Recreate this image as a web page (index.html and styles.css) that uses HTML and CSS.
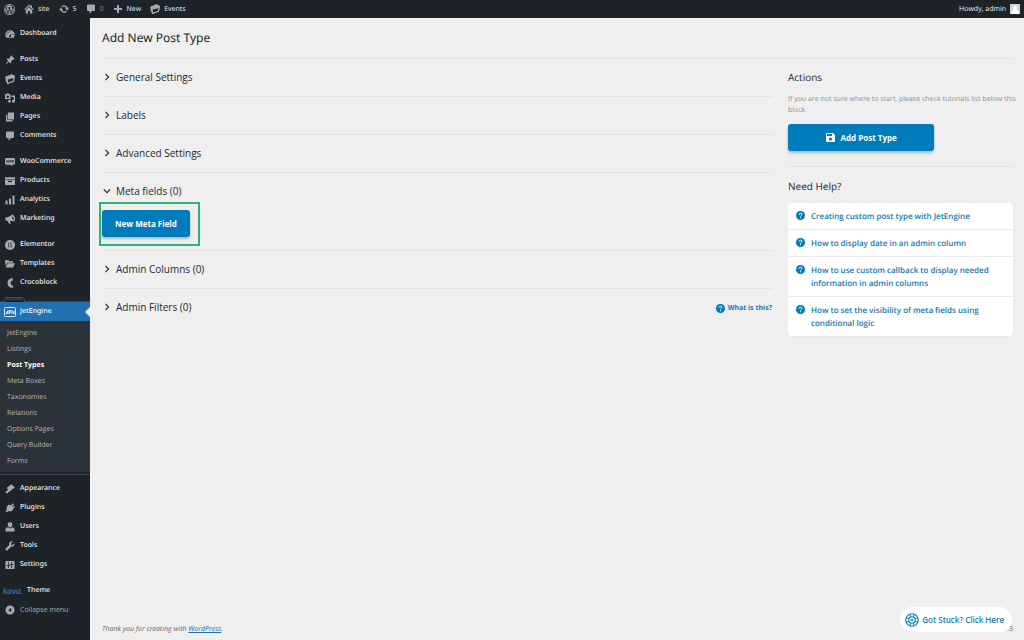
FILE: index.html
```html
<!DOCTYPE html>
<html lang="en">
<head>
<meta charset="utf-8">
<title>Add New Post Type</title>
<link rel="stylesheet" href="styles.css">
</head>
<body>
<svg class="sprite" aria-hidden="true">
  <symbol id="i-wp" viewBox="0 0 20 20"><path fill-rule="evenodd" d="M10 0a10 10 0 1 0 0 20 10 10 0 0 0 0-20zm0 1.2a8.800 8.800 0 1 1 0 17.600 8.800 8.800 0 0 1 0-17.600z"/><path d="M2.200 10c0 3.100 1.800 5.700 4.400 7L2.900 6.800A7.700 7.700 0 0 0 2.200 10zM15.300 9.600c0-1-.4-1.600-.7-2.100-.4-.7-.8-1.200-.8-1.900 0-.7.600-1.400 1.300-1.400A7.800 7.800 0 0 0 3.500 5.700h1.900c.8 0 .8.800.1.900l-.8.100 2.600 7.800 1.600-4.700-1.100-3.100-.8-.1c-.4 0-.4-.8.100-.9h4.200c.6.100.6.800 0 .9l-.8.100 2.600 7.700.8-2.600c.9-1.300 1.400-1.800 1.400-2.200zM10.100 10.700l-2.300 6.800c1.500.5 3.300.4 4.800-.1zM16.800 6.300c.3 1.600-.1 2.700-.5 3.800l-2.400 6.700a7.800 7.800 0 0 0 2.900-10.500z"/></symbol>
  <symbol id="i-home" viewBox="0 0 20 20"><path d="M10 1l3 3V2.500h3V7l3.500 3.500-1.500 1.500L10 4.200 2 12 .5 10.500zM10 6l6.500 6.300V19H12v-5H8v5H3.500v-6.700z"/></symbol>
  <symbol id="i-update" viewBox="0 0 20 20"><path d="M10.200 2.500c3.200 0 5.800 1.900 6.800 4.800H20l-4 6-4-6h2a4.300 4.300 0 0 0-7.200-.6L4.600 4.700a7.400 7.400 0 0 1 5.600-2.200zM4 6.700l4 6H6a4.300 4.300 0 0 0 7.200.6l2.200 2A7.400 7.400 0 0 1 3 12.700H0z"/></symbol>
  <symbol id="i-comment" viewBox="0 0 20 20"><path d="M4 1h12q2 0 2 2v9q0 2-2 2h-4l-5 5.500V14H4q-2 0-2-2V3q0-2 2-2z"/></symbol>
  <symbol id="i-plus" viewBox="0 0 20 20"><path d="M8 2h4v6h6v4h-6v6H8v-6H2V8h6z"/></symbol>
  <symbol id="i-events" viewBox="0 0 20 20"><path fill-rule="evenodd" d="M.5 5.500L14 0l2 2.500 3.500.5L20 6l-2 9.500L4.500 20.500 1.500 13zM5 10l1.500 6.800 9.300-3.300 1.200-6.500z"/><path d="M1.500 6L18 3v5L4 11.500z"/></symbol>
  <symbol id="i-dash" viewBox="0 0 20 20"><path fill-rule="evenodd" d="M3 17.500h14A9 9 0 0 0 10 2.500a9 9 0 0 0-7 15zM9 4.500h2v2H9zM5 6h2v2H5zm-2 4h2v2H3zm12 0h2v2h-2zm-1.500-3.500L11.800 13a2 2 0 1 1-1.500-.8z"/></symbol>
  <symbol id="i-pin" viewBox="0 0 20 20"><path d="M10.500 3l1.800-2.300 7 7L17 9.500l-1.300-.2-3.200 3.200c.4 1.800.2 3.500-1 4.700L8 13.500 1.500 19 1 18.500l5.200-6.800L2.700 8.300C4 7 5.500 6.700 7.500 7.300L10.700 4z"/></symbol>
  <symbol id="i-media" viewBox="0 0 20 20"><path fill-rule="evenodd" d="M0 2.500h2.500L3.500 1h4l1 1.500H11V12H0zM5.500 5a2.500 2.500 0 1 0 0 5 2.500 2.500 0 0 0 0-5z"/><path d="M12.500 5H20v11.500a3 3 0 1 1-2.500-3V8h-5zM9 13.500h2.500v3.300a2.700 2.700 0 1 1-2.500-3z"/></symbol>
  <symbol id="i-pages" viewBox="0 0 20 20"><path d="M6 15V1h12v14zM4.800 5v11.200H15V19H2V5z"/></symbol>
  <symbol id="i-woo" viewBox="0 0 22 20"><path d="M3 1h16q3 0 3 3v9q0 3-3 3h-4l1 3.500L11 16H3q-3 0-3-3V4q0-3 3-3z"/><path class="cut" d="M3 6l1.500 5 2-4 1.500 4L9.500 6M11.500 6.500H14v4h-2.500zM16.500 6.500H19v4h-2.500z"/></symbol>
  <symbol id="i-products" viewBox="0 0 20 20"><path fill-rule="evenodd" d="M0 2.500h20v4H0zm0 5h20V18H0zm6 2v2.500h8V9.500z"/></symbol>
  <symbol id="i-analytics" viewBox="0 0 20 20"><path d="M1 11h4v8H1zM8 7h4v12H8zM15 1h4v18h-4z"/></symbol>
  <symbol id="i-marketing" viewBox="0 0 20 20"><path fill-rule="evenodd" d="M14 1c5 1 8 9.500 4.500 13.500-2 .5-5.500-1.300-8.500-1.200l1.500 5.500-3.500.7-2.500-5.500C1.500 14.500-.5 10.500.8 7 5.500 6.500 10 5.500 14 1zm.2 4c-1 2.500.8 6 3 6.700 1-3-.8-6.500-3-6.700z"/></symbol>
  <symbol id="i-elementor" viewBox="0 0 20 20"><circle cx="10" cy="10" r="10"/><path class="cut" d="M7 5.500v9M9.500 6.500H14M9.500 10H14M9.500 13.500H14"/></symbol>
  <symbol id="i-folder" viewBox="0 0 20 20"><path d="M0 2.500h7l1.500 2H16v3H4.500L1 14zM5.500 8.500H20l-4 8.500H1z"/></symbol>
  <symbol id="i-croco" viewBox="0 0 20 20"><path d="M15.500 0v5.500A4.500 4.500 0 0 0 11 10a4.500 4.500 0 0 0 4.500 4.500V20Q5 19 5 10T15.500 0z"/></symbol>
  <symbol id="i-jet" viewBox="0 0 24 20"><rect class="line" x="1" y="1" width="22" height="18" rx="2"/><path class="line" d="M4 14l4-7v7M5 12h3M11 14V7h3M11 10h3M16 14V7l4 7V7"/></symbol>
  <symbol id="i-brush" viewBox="0 0 20 20"><path d="M9.500 3L13 .5l6.500 5.800L18 9.500l-2.500-.7-3.500 4.200c.2 1.200-1.800 2-2.800 1L5 18.500q-2.500 1-3.500-.5t.2-2.500L6.500 11 4 9q-.5-2.500 1.500-3.200z"/></symbol>
  <symbol id="i-plug" viewBox="0 0 20 20"><path d="M12 5l4-4.500L18 2.500l-3.500 4L16 8l2.500-2.500L20 7.500l-3.500 4C15.500 16.500 10 18 6.500 16L3.500 19 1 16.500l3-3C2 10 3.500 6 8 3z"/></symbol>
  <symbol id="i-user" viewBox="0 0 20 20"><path d="M10 .5a4.500 4.500 0 0 1 4.500 4.800c0 2.700-2 5.200-4.500 5.200S5.500 8 5.500 5.300A4.500 4.500 0 0 1 10 .5zM5.500 10.500L10 13l4.500-2.500Q19 11.500 19 15v4H1v-4q0-3.500 4.500-4.500z"/></symbol>
  <symbol id="i-tool" viewBox="0 0 20 20"><path d="M17.500 10c-1.300 1.200-3.500 1.600-5.100 1L5 18.700q-1.800 1-3.200-.4T1.300 15L8.800 7.800A5.200 5.200 0 0 1 15.700 1L12 5l.5 2.500 2.500.6 3.800-3.600c.5 1.800.1 4.100-1.300 5.500z"/></symbol>
  <symbol id="i-settings" viewBox="0 0 20 20"><path fill-rule="evenodd" d="M1 2h18v16H1zm5 2v6H4v2h2v4h1.500v-4h2v-2h-2V4zm6.500 0v4h-2v2h2v6H14v-6h2V8h-2V4z"/></symbol>
  <symbol id="i-collapse" viewBox="0 0 20 20"><path fill-rule="evenodd" d="M10 1a9 9 0 1 0 0 18 9 9 0 0 0 0-18zm2.500 4.500v9L6.500 10z"/></symbol>
  <symbol id="i-right" viewBox="0 0 10 10"><path class="stroke" d="M3 1l4 4-4 4"/></symbol>
  <symbol id="i-down" viewBox="0 0 10 10"><path class="stroke" d="M1 3l4 4 4-4"/></symbol>
  <symbol id="i-save" viewBox="0 0 18 18"><path fill-rule="evenodd" d="M2 0h12l4 4v12q0 2-2 2H2q-2 0-2-2V2q0-2 2-2zm0 2v4h10V2zm7 7a3 3 0 1 0 0 6.400A3 3 0 0 0 9 9z"/></symbol>
  <symbol id="i-help" viewBox="0 0 20 20"><circle cx="10" cy="10" r="10"/><path class="mark" d="M7 8q0-3.200 3-3.200T13 7.600q0 1.400-1.500 2.300T10 12.200M10 14v2.200"/></symbol>
  <symbol id="i-buoy" viewBox="0 0 28 28"><circle class="ring" cx="14" cy="14" r="12.500"/><circle class="ring" cx="14" cy="14" r="6.500"/><path class="band" d="M10.500 2v6M17.500 2v6M10.500 20v6M17.500 20v6M2 10.500h6M2 17.500h6M20 10.500h6M20 17.500h6"/><path class="band" d="M11 12.500h6M11 15.500h6"/></symbol>
</svg>

<header class="adminbar">
  <nav class="adminbar-nav" aria-label="Toolbar">
    <a href="#" aria-label="About WordPress"><svg class="icon icon-wp"><use href="#i-wp"/></svg></a>
    <a href="#"><svg class="icon"><use href="#i-home"/></svg>site</a>
    <a href="#"><svg class="icon"><use href="#i-update"/></svg>5</a>
    <a href="#" class="faded"><svg class="icon"><use href="#i-comment"/></svg>0</a>
    <a href="#"><svg class="icon"><use href="#i-plus"/></svg>New</a>
    <a href="#"><svg class="icon"><use href="#i-events"/></svg>Events</a>
  </nav>
  <a href="#" class="account">Howdy, admin
    <svg class="avatar" viewBox="0 0 20 20"><path d="M0 0h20v20H0z" fill="#d2d2d2"/><path d="M10 3a4 4.500 0 0 1 2.500 8Q18 13 18 20H2q0-7 5.500-9A4 4.500 0 0 1 10 3z" fill="#fff"/></svg>
  </a>
</header>

<div class="shell">
  <nav class="sidebar" aria-label="Main menu">
    <ul class="group">
      <li><a href="#"><svg class="icon"><use href="#i-dash"/></svg>Dashboard</a></li>
    </ul>
    <ul class="group">
      <li><a href="#"><svg class="icon"><use href="#i-pin"/></svg>Posts</a></li>
      <li><a href="#"><svg class="icon"><use href="#i-events"/></svg>Events</a></li>
      <li><a href="#"><svg class="icon"><use href="#i-media"/></svg>Media</a></li>
      <li><a href="#"><svg class="icon"><use href="#i-pages"/></svg>Pages</a></li>
      <li><a href="#"><svg class="icon"><use href="#i-comment"/></svg>Comments</a></li>
    </ul>
    <ul class="group">
      <li><a href="#"><svg class="icon"><use href="#i-woo"/></svg>WooCommerce</a></li>
      <li><a href="#"><svg class="icon"><use href="#i-products"/></svg>Products</a></li>
      <li><a href="#"><svg class="icon"><use href="#i-analytics"/></svg>Analytics</a></li>
      <li><a href="#"><svg class="icon"><use href="#i-marketing"/></svg>Marketing</a></li>
    </ul>
    <ul class="group">
      <li><a href="#"><svg class="icon"><use href="#i-elementor"/></svg>Elementor</a></li>
      <li><a href="#"><svg class="icon"><use href="#i-folder"/></svg>Templates</a></li>
      <li><a href="#"><svg class="icon"><use href="#i-croco"/></svg>Crocoblock</a></li>
    </ul>
    <div class="divider"><span class="divider-tag">PLUGINS</span></div>
    <ul class="jet">
      <li><a href="#" class="current"><svg class="icon icon-jet"><use href="#i-jet"/></svg>JetEngine</a>
        <ul class="submenu">
          <li><a href="#">JetEngine</a></li>
          <li><a href="#">Listings</a></li>
          <li><a href="#" class="selected">Post Types</a></li>
          <li><a href="#">Meta Boxes</a></li>
          <li><a href="#">Taxonomies</a></li>
          <li><a href="#">Relations</a></li>
          <li><a href="#">Options Pages</a></li>
          <li><a href="#">Query Builder</a></li>
          <li><a href="#">Forms</a></li>
        </ul>
      </li>
    </ul>
    <div class="divider divider-end"></div>
    <ul class="group">
      <li><a href="#"><svg class="icon"><use href="#i-brush"/></svg>Appearance</a></li>
      <li><a href="#"><svg class="icon"><use href="#i-plug"/></svg>Plugins</a></li>
      <li><a href="#"><svg class="icon"><use href="#i-user"/></svg>Users</a></li>
      <li><a href="#"><svg class="icon"><use href="#i-tool"/></svg>Tools</a></li>
      <li><a href="#"><svg class="icon"><use href="#i-settings"/></svg>Settings</a></li>
    </ul>
    <ul class="group">
      <li><a href="#" class="theme"><span class="kava" aria-hidden="true">kava.</span>Theme</a></li>
      <li><button type="button" class="collapse"><svg class="icon"><use href="#i-collapse"/></svg>Collapse menu</button></li>
    </ul>
  </nav>

  <div class="page">
    <main>
      <h1>Add New Post Type</h1>
      <div class="columns">
        <div class="sections">
          <section><h2><button type="button"><svg class="chevron"><use href="#i-right"/></svg>General Settings</button></h2></section>
          <section><h2><button type="button"><svg class="chevron"><use href="#i-right"/></svg>Labels</button></h2></section>
          <section><h2><button type="button"><svg class="chevron"><use href="#i-right"/></svg>Advanced Settings</button></h2></section>
          <section>
            <h2><button type="button" aria-expanded="true"><svg class="chevron"><use href="#i-down"/></svg>Meta fields (0)</button></h2>
            <div class="section-body">
              <div class="marked"><button type="button" class="btn">New Meta Field</button></div>
            </div>
          </section>
          <section><h2><button type="button"><svg class="chevron"><use href="#i-right"/></svg>Admin Columns (0)</button></h2></section>
          <section class="with-link"><h2><button type="button"><svg class="chevron"><use href="#i-right"/></svg>Admin Filters (0)</button></h2>
            <a href="#" class="what"><svg class="help"><use href="#i-help"/></svg>What is this?</a></section>
        </div>
        <aside>
          <div class="actions">
            <h2>Actions</h2>
            <p>If you are not sure where to start, please check tutorials list below this block</p>
            <button type="button" class="btn btn-save"><svg class="save"><use href="#i-save"/></svg>Add Post Type</button>
          </div>
          <h2 class="need">Need Help?</h2>
          <ul class="help-list">
            <li><a href="#"><svg class="help"><use href="#i-help"/></svg>Creating custom post type with JetEngine</a></li>
            <li><a href="#"><svg class="help"><use href="#i-help"/></svg>How to display date in an admin column</a></li>
            <li><a href="#"><svg class="help"><use href="#i-help"/></svg>How to use custom callback to display needed information in admin columns</a></li>
            <li><a href="#"><svg class="help"><use href="#i-help"/></svg>How to set the visibility of meta fields using conditional logic</a></li>
          </ul>
        </aside>
      </div>
    </main>
    <footer>
      <span class="thanks">Thank you for creating with <a href="#">WordPress</a>.</span>
      <span>.3</span>
    </footer>
  </div>
</div>
<button type="button" class="stuck"><svg class="buoy"><use href="#i-buoy"/></svg>Got Stuck? Click Here</button>
</body>
</html>
```

FILE: styles.css
```css
* { box-sizing: border-box; }
body {
  margin: 0;
  min-height: 100vh;
  display: flex;
  flex-direction: column;
  background: #efefef;
  color: #23282d;
  font: 8px/11px "Open Sans", "Noto Sans", sans-serif;
  text-rendering: geometricPrecision;
}
ul { list-style: none; margin: 0; padding: 0; }
h1, h2, p { margin: 0; }
a { color: inherit; text-decoration: none; }
button { border: 0; background: none; padding: 0; margin: 0; font: inherit; color: inherit; cursor: pointer; }
svg { display: block; flex: none; fill: currentColor; }
.sprite { position: absolute; width: 0; height: 0; }
.stroke { fill: none; stroke: currentColor; stroke-width: 1.400; }
.cut { fill: none; stroke: #1d2327; stroke-width: 1.400; }
.line { fill: none; stroke: currentColor; stroke-width: 1.700; }
.mark { fill: none; stroke: #fff; stroke-width: 2.200; }
.ring { fill: none; stroke: currentColor; stroke-width: 2.200; }
.band { fill: none; stroke: currentColor; stroke-width: 2; }

/* Toolbar */
.adminbar {
  display: flex;
  justify-content: space-between;
  height: 18px;
  padding: 0 4px;
  background: #1d2327;
  color: #f0f0f1;
}
.adminbar, .sidebar { font-size: 7px; font-weight: 500; }
.adminbar-nav { display: flex; gap: 9px; }
.adminbar a { display: flex; align-items: center; gap: 4px; }
.adminbar .faded { color: #8c9196; }
.icon { width: 10px; height: 10px; color: #a7aaad; }
.icon-wp { width: 11px; height: 11px; }
.avatar { width: 10px; height: 10px; }

/* Side menu */
.shell { display: flex; flex: 1; }
.sidebar { flex: none; width: 90px; padding-top: 6px; background: #1d2327; color: #f0f0f1; line-height: 12px; }
.group { margin-bottom: 7px; }
.group a, .current, .collapse { display: flex; align-items: center; gap: 5px; height: 19px; padding: 1px 0 0 5px; }
.group a, .current { font-family: "Noto Sans", "Open Sans", sans-serif; }
.divider { display: flex; align-items: center; height: 3px; border-bottom: 1px solid #3c434a; }
.divider-tag { margin-left: 4px; padding: 0 1px; border: 1px solid #3c434a; border-radius: 2px; background: #1d2327; color: #6c7075; font-size: 4px; line-height: 4px; }
.divider-end { margin-bottom: 4px; }
.current { position: relative; background: #2271b1; color: #fff; }
.current::after { content: ""; position: absolute; right: 0; top: 5px; border: 5px solid transparent; border-left: 0; border-right-color: #efefef; }
.icon-jet { width: 12px; height: 10px; color: #fff; margin: 0 -1px; }
.submenu { padding: 5px 0 2px; background: #2c3338; color: #b3b6b9; }
.submenu a { display: block; padding-left: 7px; line-height: 16px; }
.submenu .selected { color: #fff; font-weight: 700; }
.group .theme { padding-left: 3px; gap: 4px; }
.kava { color: #2e69b3; font: italic 700 9px/12px "Lato", sans-serif; }
.collapse { color: #a7aaad; }

/* Content */
.page { flex: 1; display: flex; flex-direction: column; justify-content: space-between; padding: 0 11px 0 12px; }
h1 { padding: 10px 0; border-bottom: 1px solid #e3e3e3; font: 400 12px/20px "Noto Sans", "Open Sans", sans-serif; }
h2 { font-size: 10px; line-height: 14px; font-weight: 500; }
.columns { display: flex; gap: 16px; }
.sections { flex: 1; }
.sections section { border-bottom: 1px solid #e3e3e3; }
.sections section:last-child { border-bottom: 0; }
.sections h2 { padding: 11px 0 12px; }
.sections h2 button { display: flex; align-items: center; gap: 5px; padding-left: 1px; }
.chevron { width: 8px; height: 8px; }
.section-body { padding-bottom: 13px; }
.marked { position: relative; width: fit-content; }
.marked::after { content: ""; position: absolute; inset: -8px -10px -9px -3px; border: 2px solid #2ab573; pointer-events: none; }
.btn { display: flex; align-items: center; justify-content: center; gap: 6px; height: 27px; padding: 0 13px; border-radius: 3px; background: #007cba; color: #fff; font-weight: 700; box-shadow: 0 2px 3px rgba(0, 60, 100, .3); }
.with-link { display: flex; align-items: center; justify-content: space-between; }
.what { display: flex; align-items: center; gap: 3px; padding-top: 1px; color: #2a73b0; font-family: "Noto Sans", "Open Sans", sans-serif; font-size: 7px; font-weight: 700; }
.help { width: 9px; height: 9px; color: #007cba; }

aside { flex: none; width: 225px; }
.actions { padding: 11px 0 15px; border-bottom: 1px solid #e3e3e3; }
.actions p { margin-right: -6px; padding: 10px 0 8px; color: #8b8f94; font-size: 7px; }
.btn-save { width: 65%; }
.save { width: 9px; height: 9px; }
.need { padding: 12px 0 10px; }
.help-list { border-radius: 4px; background: #fff; box-shadow: 0 1px 2px rgba(0, 0, 0, .04); }
.help-list li { border-bottom: 1px solid #ececec; }
.help-list li:last-child { border-bottom: 0; }
.help-list a { display: flex; gap: 6px; padding: 7px 20px 6px 8px; color: #1478ad; line-height: 13px; font-weight: 600; }
.help-list .help { margin-top: 1px; }

footer { display: flex; justify-content: space-between; padding-bottom: 5px; color: #646970; font-size: 7px; }
.thanks { font-style: italic; }
.thanks a { color: #2271b1; text-decoration: underline; }
.stuck { position: fixed; right: 12px; bottom: 8px; display: flex; align-items: center; gap: 3px; height: 25px; padding: 0 8px 0 5px; border-radius: 13px; background: #fff; color: #0e80ae; font-weight: 600; }
.buoy { width: 14px; height: 14px; }
```
